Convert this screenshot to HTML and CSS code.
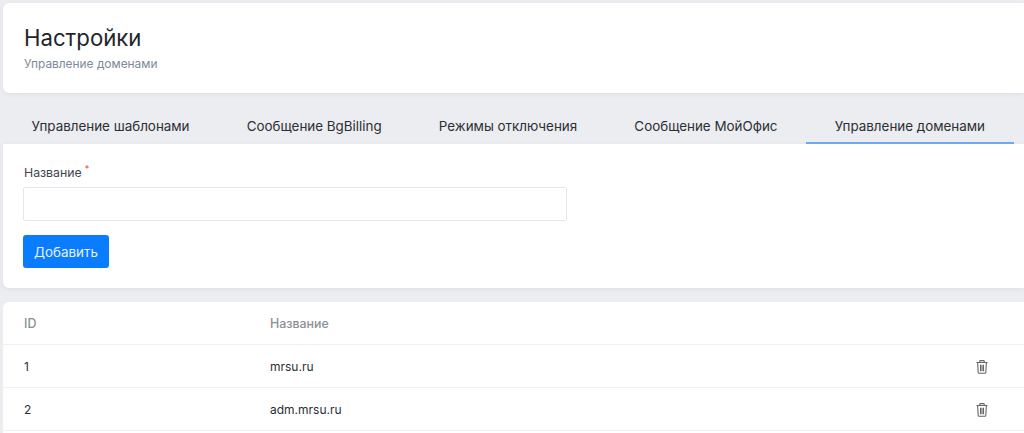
FILE: index.html
```
<!DOCTYPE html>
<html lang="ru">
<head>
<meta charset="utf-8">
<title>Настройки</title>
<link rel="stylesheet" href="styles.css">
</head>
<body>
<main class="page">
  <header class="card head">
    <h1>Настройки</h1>
    <p>Управление доменами</p>
  </header>
  <nav class="tabs">
    <a class="tab">Управление шаблонами</a>
    <a class="tab">Сообщение BgBilling</a>
    <a class="tab">Режимы отключения</a>
    <a class="tab">Сообщение МойОфис</a>
    <a class="tab active">Управление доменами</a>
  </nav>
  <form class="card form">
    <label class="label" for="name">Название<span class="req">*</span></label>
    <input class="input" id="name" type="text">
    <button class="btn" type="button">Добавить</button>
  </form>
  <section class="card table">
    <div class="row header"><span class="c-id">ID</span><span class="c-name">Название</span></div>
    <div class="row"><span class="c-id">1</span><span class="c-name">mrsu.ru</span>
      <svg class="trash" viewBox="0 0 12 14" fill="none" stroke="#666" stroke-width="1.1"><path d="M.5 2.500h11M3.800 2.500V1.100c0-.3.2-.5.5-.5h3.400c.3 0 .5.2.5.5v1.400M1.600 2.500l.6 9.900c0 .5.4.9.9.9h5.800c.5 0 .9-.4.9-.9l.6-9.900M4.500 4.700v6.600M6 4.700v6.600M7.500 4.700v6.600"/></svg></div>
    <div class="row"><span class="c-id">2</span><span class="c-name">adm.mrsu.ru</span>
      <svg class="trash" viewBox="0 0 12 14" fill="none" stroke="#666" stroke-width="1.1"><path d="M.5 2.500h11M3.800 2.500V1.100c0-.3.2-.5.5-.5h3.400c.3 0 .5.2.5.5v1.400M1.600 2.500l.6 9.900c0 .5.4.9.9.9h5.800c.5 0 .9-.4.9-.9l.6-9.900M4.500 4.700v6.600M6 4.700v6.600M7.500 4.700v6.600"/></svg></div>
  </section>
</main>
</body>
</html>
```

FILE: styles.css
```
html, body { margin: 0; height: 433px; overflow: hidden; background: #ecedf1; }
body { font-family: Inter, "Liberation Sans", sans-serif; color: #24272b; }
.page { padding: 3px 0 0 3px; width: 1024px; box-sizing: border-box; overflow: hidden; }
.card { background: #fff; border-radius: 6px 0 0 6px; box-shadow: 0 1px 4px rgba(40, 50, 70, .08); }
.head { height: 90px; box-sizing: border-box; padding: 21px 21px 0; }
h1 { margin: 0; font-size: 22.200px; font-weight: 400; line-height: 28px; color: #22252a; }
.head p { margin: 4px 0 0; font-size: 11.900px; line-height: 15px; color: #7d8a99; }
.tabs { display: flex; height: 51px; box-sizing: border-box; }
.tab { box-sizing: border-box; padding: 24px 28.600px 0; height: 51px; font-size: 13.400px; line-height: 18px; color: #2b2e33; white-space: nowrap; }
.tab.active { border-bottom: 2px solid #6ea8f5; }
.form { height: 144px; box-sizing: border-box; padding: 17px 20px 0; border-radius: 0 0 0 6px; }
.label { display: block; padding-left: 1px; font-size: 12.300px; line-height: 16px; color: #40454c; }
.req { color: #e5484d; font-size: 9px; vertical-align: 5px; margin-left: 3px; }
.input { display: block; box-sizing: border-box; width: 544px; height: 34px; margin-top: 6px; border: 1px solid #e6e7ea; border-radius: 2px; background: #fff; }
.btn { display: block; box-sizing: border-box; width: 86px; height: 33px; margin-top: 14px; border: 0; border-radius: 3px; background: #0a7cff; color: #e8f2ff; font: 400 13.400px Inter, "Liberation Sans", sans-serif; }
.table { margin-top: 14px; height: 131px; border-radius: 6px 0 0 0; box-shadow: none; }
.row { display: flex; align-items: center; height: 43px; box-sizing: border-box; padding: 1px 36px 0 21px; border-bottom: 1px solid #f1f2f4; font-size: 12px; color: #2b2e33; }
.row.header { font-size: 12.400px; font-weight: 500; color: #8c8f94; }
.c-id { width: 246px; }
.c-name { flex: 1; }
.trash { width: 12px; height: 14px; }
```
